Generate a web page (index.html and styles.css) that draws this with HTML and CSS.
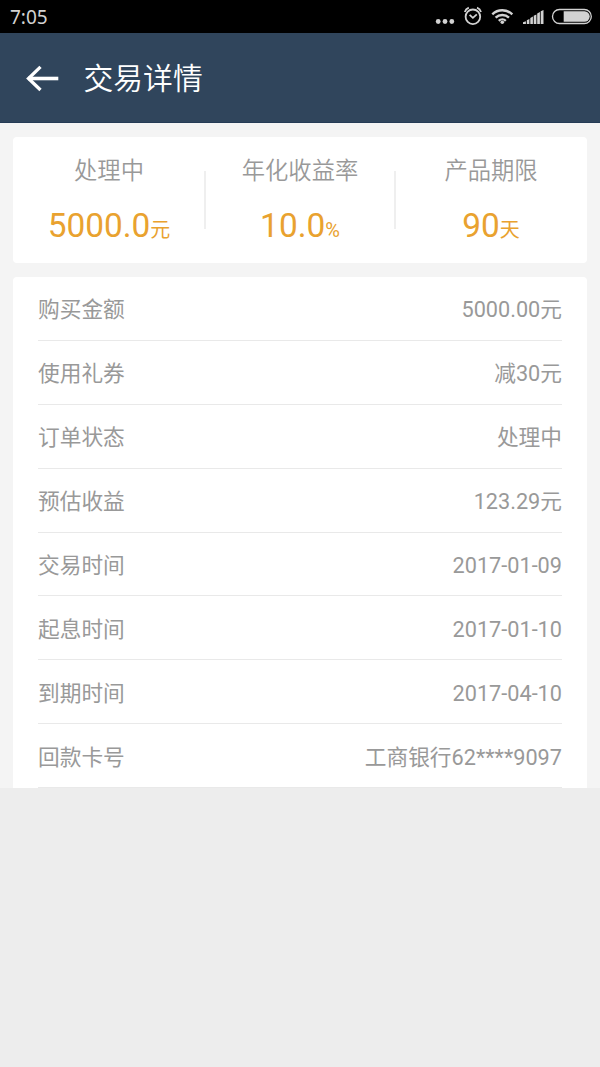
FILE: index.html
```
<!DOCTYPE html>
<html lang="zh-CN">
<head>
<meta charset="utf-8">
<title>交易详情</title>
<link rel="stylesheet" href="styles.css">
</head>
<body>
<div class="status-bar">
  <span class="clock">7:05</span>
  <svg class="status-icons" width="175" height="33" viewBox="0 0 175 33">
    <g fill="#d2d2d2">
      <circle cx="13.2" cy="21.5" r="2.4"/><circle cx="20" cy="21.5" r="2.4"/><circle cx="26.800" cy="21.5" r="2.4"/>
    </g>
    <g fill="none" stroke="#d2d2d2" stroke-width="1.800">
      <circle cx="47.900" cy="16.800" r="7.300"/>
      <path d="M44.600 14.800l3.300 3 3.900-3.500M39.800 12q.8-3 4-4.300M56 12q-.8-3-4-4.300"/>
    </g>
    <g fill="none" stroke="#d2d2d2" stroke-width="2.400">
      <path d="M67.300 14.300a14.200 14.200 0 0 1 20 0M70.600 17.700a9.600 9.600 0 0 1 13.400 0M73.800 20.800a5 5 0 0 1 7 0"/>
    </g>
    <circle cx="77.300" cy="22.200" r="1.800" fill="#d2d2d2"/>
    <path fill="#d2d2d2" d="M98 24v-1.700l2.900-1V24zM101.800 24v-3.800l2.600-1.200V24zM105.300 24v-6l2.600-1.400V24zM108.700 24v-8.200l2.700-1.400V24zM112.200 24v-10.500l2.700-1.400V24zM115.700 24v-12.700l2.800-1.400V24z"/>
    <rect x="127.500" y="9.500" width="38.800" height="14" rx="7" fill="none" stroke="#d2d2d2" stroke-width="1.300"/>
    <path fill="#d2d2d2" d="M138.700 11.300H159.500a5.200 5.200 0 0 1 0 10.400H138.700z"/>
  </svg>
</div>
<header class="app-bar">
  <svg class="back" width="34" height="28" viewBox="0 0 34 28" fill="none" stroke="#fff">
    <path d="M3 14.500H33.300" stroke-width="3.600"/><path d="M15.500 2.900L3.500 14.500l12 11.500" stroke-width="3.300"/>
  </svg>
  <h1 class="title">交易详情</h1>
</header>
<main class="content">
  <section class="card summary">
    <div class="stat"><div class="stat-label">处理中</div><div class="stat-value">5000.0<span class="unit">元</span></div></div>
    <div class="stat"><div class="stat-label">年化收益率</div><div class="stat-value">10.0<span class="unit">%</span></div></div>
    <div class="stat"><div class="stat-label">产品期限</div><div class="stat-value">90<span class="unit">天</span></div></div>
  </section>
  <section class="card details">
    <div class="row"><span>购买金额</span><span>5000.00元</span></div>
    <div class="row"><span>使用礼券</span><span>减30元</span></div>
    <div class="row"><span>订单状态</span><span>处理中</span></div>
    <div class="row"><span>预估收益</span><span>123.29元</span></div>
    <div class="row"><span>交易时间</span><span>2017-01-09</span></div>
    <div class="row"><span>起息时间</span><span>2017-01-10</span></div>
    <div class="row"><span>到期时间</span><span>2017-04-10</span></div>
    <div class="row"><span>回款卡号</span><span>工商银行62****9097</span></div>
  </section>
</main>
</body>
</html>
```
FILE: styles.css
```
* { box-sizing: border-box; }
body {
  margin: 0;
  min-height: 1067px;
  background: #ededed;
  font-family: Roboto, "Noto Sans CJK SC", sans-serif;
  color: #999;
}
.status-bar {
  display: flex;
  justify-content: space-between;
  height: 33px;
  padding-left: 10px;
  background: #000;
}
.clock {
  font: 19px/35px "Noto Sans", sans-serif;
  color: #d2d2d2;
}
.app-bar {
  display: flex;
  align-items: center;
  height: 90px;
  padding-left: 25px;
  background: #30455c;
  border-bottom: 1px solid #253b55;
}
.back { display: block; }
.title {
  margin: 2px 0 0 24.5px;
  font-size: 29.8px;
  line-height: 44px;
  font-weight: 350;
  color: #fff;
}
.content {
  height: 665px;
  padding: 14px 13px 0;
  background: #f4f4f4;
}
.card {
  background: #fff;
  border-radius: 4px;
}
.summary {
  display: grid;
  grid-template-columns: 192px 190px 192px;
  height: 126px;
  margin-bottom: 14px;
}
.stat {
  position: relative;
  padding-top: 17px;
  text-align: center;
}
.stat + .stat::before {
  content: "";
  position: absolute;
  left: -1px;
  top: 34px;
  width: 2px;
  height: 58px;
  background: #efefef;
}
.stat-label {
  font-size: 23.3px;
  line-height: 34px;
  font-weight: 350;
}
.stat-value {
  margin-top: 16px;
  font-size: 33.4px;
  line-height: 44px;
  color: #e9a22f;
}
.unit { font-size: 20px; }
.details {
  padding: 0 25px;
  border-radius: 4px 4px 0 0;
}
.row {
  display: flex;
  justify-content: space-between;
  align-items: center;
  height: 63.9px;
  padding-top: 4px;
  border-bottom: 1.5px solid #e9e9e9;
  font-size: 21.7px;
  line-height: 32px;
}
```
